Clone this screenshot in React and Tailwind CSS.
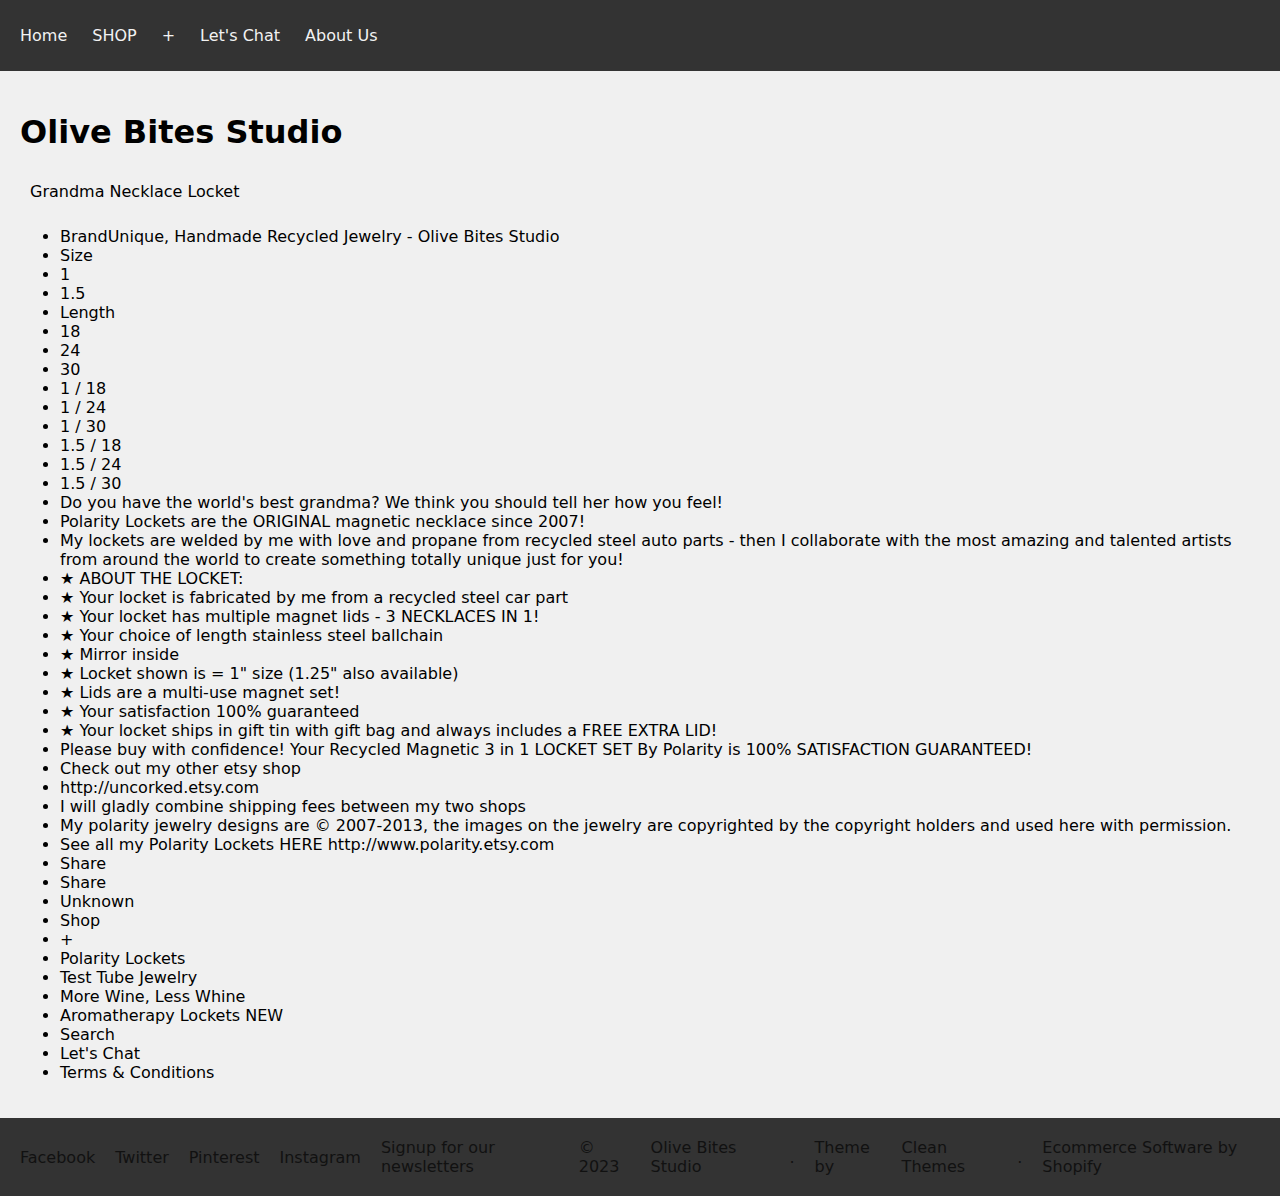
const navLinks = ["Home", "SHOP", "+", "Let's Chat", "About Us"];

const items = [
  "BrandUnique, Handmade Recycled Jewelry - Olive Bites Studio",
  "Size",
  "1",
  "1.5",
  "Length",
  "18",
  "24",
  "30",
  "1 / 18",
  "1 / 24",
  "1 / 30",
  "1.5 / 18",
  "1.5 / 24",
  "1.5 / 30",
  "Do you have the world's best grandma? We think you should tell her how you feel!",
  "Polarity Lockets are the ORIGINAL magnetic necklace since 2007!",
  "My lockets are welded by me with love and propane from recycled steel auto parts - then I collaborate with the most amazing and talented artists from around the world to create something totally unique just for you!",
  "★ ABOUT THE LOCKET:",
  "★ Your locket is fabricated by me from a recycled steel car part",
  "★ Your locket has multiple magnet lids - 3 NECKLACES IN 1!",
  "★ Your choice of length stainless steel ballchain",
  "★ Mirror inside",
  "★ Locket shown is = 1\" size (1.25\" also available)",
  "★ Lids are a multi-use magnet set!",
  "★ Your satisfaction 100% guaranteed",
  "★ Your locket ships in gift tin with gift bag and always includes a FREE EXTRA LID!",
  "Please buy with confidence! Your Recycled Magnetic 3 in 1 LOCKET SET By Polarity is 100% SATISFACTION GUARANTEED!",
  "Check out my other etsy shop",
  "http://uncorked.etsy.com",
  "I will gladly combine shipping fees between my two shops",
  "My polarity jewelry designs are © 2007-2013, the images on the jewelry are copyrighted by the copyright holders and used here with permission.",
  "See all my Polarity Lockets HERE http://www.polarity.etsy.com",
  "Share",
  "Share",
  "Unknown",
  "Shop",
  "+",
  "Polarity Lockets",
  "Test Tube Jewelry",
  "More Wine, Less Whine",
  "Aromatherapy Lockets NEW",
  "Search",
  "Let's Chat",
  "Terms & Conditions",
];

const footerItems = [
  "Facebook",
  "Twitter",
  "Pinterest",
  "Instagram",
  "Signup for our newsletters",
  "© 2023",
  "Olive Bites Studio",
  ".",
  "Theme by",
  "Clean Themes",
  ".",
  "Ecommerce Software by Shopify",
];

export default function App() {
  return (
    <div className="min-h-screen bg-[#f0f0f0] text-black text-[16px] leading-[19px] font-['DejaVu_Sans',sans-serif]">
      {/* Top nav */}
      <nav className="h-[71px] bg-[#333333] flex items-center gap-[25px] px-5 text-[#f2f2f2]">
        {navLinks.map((l, i) => (
          <a key={i} href="#">{l}</a>
        ))}
      </nav>

      <main className="px-5 pb-5 pt-5">
        <h1 className="mt-[22px] mb-[20px] text-[32px] leading-[38px] font-bold">Olive Bites Studio</h1>
        <div className="px-[10px] pt-[11px] pb-[10px]">Grandma Necklace Locket</div>
        <ul className="my-4 pl-10 list-disc">
          {items.map((t, i) => (
            <li key={i}>{t}</li>
          ))}
        </ul>
      </main>

      {/* Footer */}
      <footer className="bg-[#333333] flex items-center gap-5 px-5 py-5 text-[#111111]">
        {footerItems.map((t, i) => (
          <div key={i}>{t}</div>
        ))}
      </footer>
    </div>
  );
}
